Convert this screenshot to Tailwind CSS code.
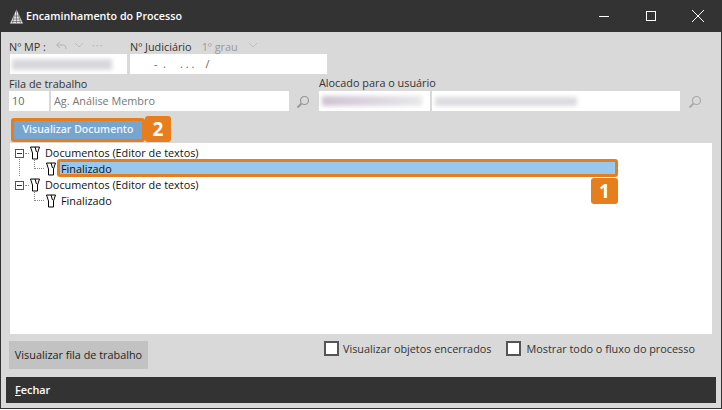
<!DOCTYPE html>
<html lang="en">
<head>
    <meta charset="UTF-8">
    <title>Encaminhamento do Processo</title>
    <script src="https://cdn.jsdelivr.net/npm/@tailwindcss/browser@4"></script>
</head>
<body class="bg-white">
    <div class="w-[722px] h-[409px] flex flex-col bg-[#d9d9d9] border border-[#333] border-t-0 font-['Open_Sans','Noto_Sans',sans-serif] text-[10.85px] text-[#333] overflow-hidden">
        <!-- title bar -->
        <div class="h-8 shrink-0 bg-[#333] flex items-center pl-[8px] text-white">
            <svg width="15" height="15" viewBox="0 0 15 15" class="mr-[2px]"><path d="M7.500 0.500 L14 14.500 H1 Z" fill="#e4e4e4"/><path d="M7.500 1 V14 M5 7 H10 M3.500 10 H11.500 M2.500 12.500 H12.500 M5.500 5 L3.500 14 M9.500 5 L11.500 14" stroke="#666" stroke-width="0.700" fill="none"/></svg>
            <span class="font-semibold text-[10.7px] leading-none mt-px">Encaminhamento do Processo</span>
            <div class="ml-auto flex items-center">
                <svg width="12" height="12" viewBox="0 0 12 12" class="mr-[35px]"><path d="M1 6.500 H11" stroke="#fff"/></svg>
                <svg width="12" height="12" viewBox="0 0 12 12" class="mr-[34px]"><rect x="1.500" y="1.500" width="9" height="9" fill="none" stroke="#fff"/></svg>
                <svg width="14" height="14" viewBox="0 0 14 14" class="mr-[16px]"><path d="M1 1 L13 13 M13 1 L1 13" stroke="#fff"/></svg>
            </div>
        </div>

        <div class="flex-1 flex flex-col pl-[7px] pr-[9px]">
            <!-- MP row -->
            <div class="flex mt-[8px] h-[14px] items-center leading-none">
                <div class="w-[122px] flex items-center">
                    <span class="ml-px">Nº MP :</span>
                    <svg width="12" height="10" viewBox="0 0 12 10" class="ml-[9px] -mt-[3px]"><path d="M5 1 L1.500 4 L5 7 M2 4 H9 Q11 4 11 8" fill="none" stroke="#b5b5b5"/></svg>
                    <svg width="10" height="6" viewBox="0 0 10 6" class="ml-[7px] -mt-[5px]"><path d="M1 1 L5 5 L9 1" fill="none" stroke="#c0c0c0"/></svg>
                    <span class="ml-[8px] -mt-[3px] text-[#b0b0b0] tracking-[1px]">···</span>
                </div>
                <span>Nº Judiciário</span>
                <span class="ml-[10px] text-[#999]">1º grau</span>
                <svg width="10" height="6" viewBox="0 0 10 6" class="ml-[10px] -mt-[5px]"><path d="M1 1 L5 5 L9 1" fill="none" stroke="#c0c0c0"/></svg>
            </div>
            <div class="flex h-[20px] ml-[2px] gap-[3px]">
                <div class="w-[117px] bg-white flex items-center overflow-hidden px-[2px]"><span class="block w-[100px] h-[11px] bg-[#d8d8dc] blur-[2px]"></span></div>
                <div class="w-[197px] bg-white flex items-center text-[#666] pl-[24px] whitespace-pre">-  .     . . .    /</div>
            </div>

            <!-- fila row -->
            <div class="flex mt-[4px] h-[13px] items-center leading-none">
                <span class="w-[310px] ml-px">Fila de trabalho</span>
                <span class="-mt-[2px]">Alocado para o usuário</span>
            </div>
            <div class="flex h-[20px] ml-px">
                <div class="w-[40px] bg-white flex items-center pl-[3px] text-[#666]">10</div>
                <div class="w-[238px] ml-[2px] bg-white flex items-center pl-[3px] text-[#777]">Ag. Análise Membro</div>
                <svg width="14" height="14" viewBox="0 0 14 14" class="ml-[7px] mt-[4px]"><circle cx="8.500" cy="5.500" r="4" fill="none" stroke="#999" stroke-width="1.200"/><path d="M5.500 8.500 L1.500 12.500" stroke="#999" stroke-width="2"/></svg>
                <div class="w-[111px] ml-[9px] bg-white flex items-center overflow-hidden px-[3px]"><span class="block w-[100px] h-[10px] bg-linear-to-r from-[#cfc3d3] to-[#e8e8ea] blur-[2px]"></span></div>
                <div class="w-[248px] ml-[2px] bg-white flex items-center overflow-hidden pl-[3px]"><span class="block w-[142px] h-[9px] bg-[#dcdce0] blur-[2px]"></span></div>
                <svg width="14" height="14" viewBox="0 0 14 14" class="ml-[8px] mt-[4px]"><circle cx="8.500" cy="5.500" r="4" fill="none" stroke="#aaa" stroke-width="1.200"/><path d="M5.500 8.500 L1.500 12.500" stroke="#aaa" stroke-width="2"/></svg>
            </div>

            <!-- visualizar documento + badge 2 -->
            <div class="flex mt-[7px] h-[25px] ml-[3px]">
                <div class="w-[134px] h-[24px] bg-[#76a5d0] border-[3px] border-[#e67e1e] rounded-[3px] flex items-center justify-center font-semibold text-[#eef4fa] text-[10.500px]">Visualizar Documento</div>
                <div class="w-[26px] h-[26px] -mt-[2px] bg-[#e67e1e] rounded-[3px] text-white flex items-center justify-center font-bold text-[19px] leading-none">2</div>
            </div>

            <!-- tree -->
            <div class="relative h-[191px] ml-[2px] w-[702px] bg-white text-[#111]">
                <div class="pl-[5px] pt-[2px] leading-[16px]">
                    <div class="flex items-center h-[16px]">
                        <span class="w-[9px] h-[9px] border border-[#555] flex items-center justify-center"><span class="w-[5px] h-px bg-[#333]"></span></span>
                        <span class="w-[4px] border-t border-dotted border-[#888] ml-px"></span>
                        <svg width="12" height="14" viewBox="0 0 12 14"><path d="M1.500 1 H10.500 L8.500 7 V13 H3.500 V7 Z M6 1 L7.500 6" fill="#fff" stroke="#000"/></svg>
                        <span class="ml-[4px]">Documentos (Editor de textos)</span>
                    </div>
                    <div class="flex items-center h-[16px] pl-[19px]">
                        <span class="w-[10px] h-[10px] -mt-[10px] border-l border-b border-dotted border-[#888]"></span>
                        <span class="w-px"></span>
                        <svg width="12" height="14" viewBox="0 0 12 14"><path d="M1.500 1 H10.500 L8.500 7 V13 H3.500 V7 Z M6 1 L7.500 6" fill="#fff" stroke="#000"/></svg>
                        <span class="ml-[4px] relative z-10">Finalizado</span>
                    </div>
                    <div class="flex items-center h-[16px]">
                        <span class="w-[9px] h-[9px] border border-[#555] flex items-center justify-center"><span class="w-[5px] h-px bg-[#333]"></span></span>
                        <span class="w-[4px] border-t border-dotted border-[#888] ml-px"></span>
                        <svg width="12" height="14" viewBox="0 0 12 14"><path d="M1.500 1 H10.500 L8.500 7 V13 H3.500 V7 Z M6 1 L7.500 6" fill="#fff" stroke="#000"/></svg>
                        <span class="ml-[4px]">Documentos (Editor de textos)</span>
                    </div>
                    <div class="flex items-center h-[16px] pl-[19px]">
                        <span class="w-[10px] h-[10px] -mt-[10px] border-l border-b border-dotted border-[#888]"></span>
                        <span class="w-px"></span>
                        <svg width="12" height="14" viewBox="0 0 12 14"><path d="M1.500 1 H10.500 L8.500 7 V13 H3.500 V7 Z M6 1 L7.500 6" fill="#fff" stroke="#000"/></svg>
                        <span class="ml-[4px]">Finalizado</span>
                    </div>
                </div>
                <!-- dotted line joining the two root nodes -->
                <div class="absolute left-[9px] top-[16px] h-[17px] border-l border-dotted border-[#888]"></div>
                <!-- highlight behind the selected row's label -->
                <div class="absolute left-[47px] top-[16px] w-[561px] h-[18px] bg-[#99c8ee] border-[3px] border-[#e67e1e] rounded-[3px]"></div>
                <div class="absolute left-[581px] top-[35px] w-[27px] h-[26px] bg-[#e67e1e] rounded-[3px] text-white flex items-center justify-center font-bold text-[19px] leading-none">1</div>
            </div>

            <!-- bottom controls -->
            <div class="flex mt-[7px] ml-px h-[28px] w-[703px]">
                <div class="w-[139px] bg-[#c2c2c2] flex items-center justify-center text-[#222]">Visualizar fila de trabalho</div>
                <label class="flex items-start ml-[176px]">
                    <span class="w-[15px] h-[15px] border-2 border-[#555] bg-white"></span>
                    <span class="ml-[4px] leading-[15px]">Visualizar objetos encerrados</span>
                </label>
                <label class="flex items-start ml-[15px]">
                    <span class="w-[15px] h-[15px] border-2 border-[#555] bg-white"></span>
                    <span class="ml-[5px] leading-[15px]">Mostrar todo o fluxo do processo</span>
                </label>
            </div>

            <!-- footer -->
            <div class="mt-[8px] -ml-[2px] w-[710px] h-[26px] bg-[#333] text-white font-semibold flex items-center pl-[9px]"><span><span class="underline">F</span>echar</span></div>
        </div>
    </div>
</body>
</html>
